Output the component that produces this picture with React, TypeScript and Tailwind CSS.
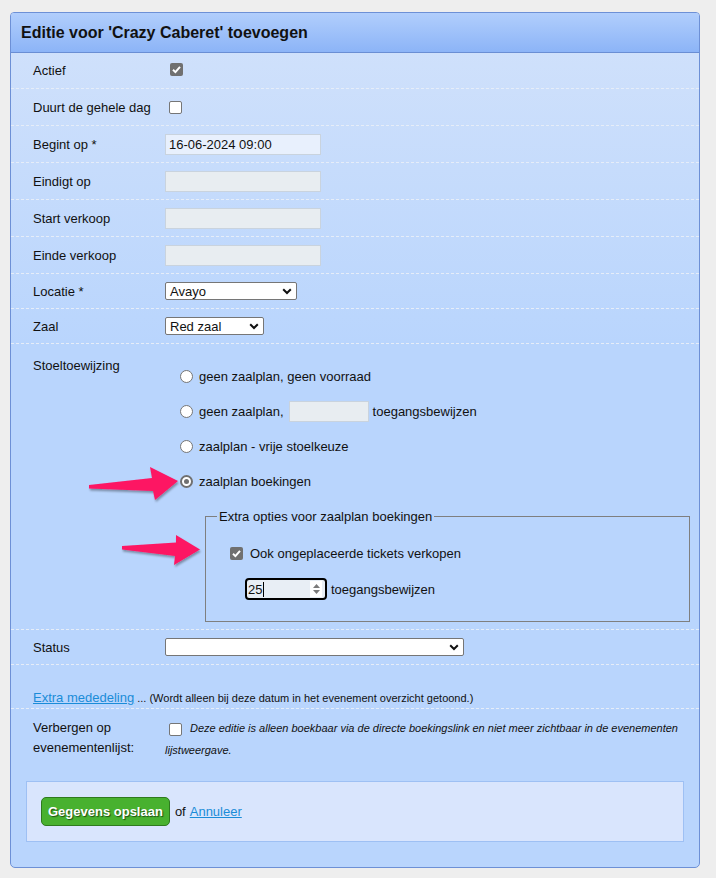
import React from "react";

const CheckBox = ({ checked }: { checked?: boolean }) =>
  checked ? (
    <span className="inline-flex h-[13px] w-[13px] shrink-0 items-center justify-center rounded-[2px] bg-[#707070]">
      <svg width="13" height="13" viewBox="0 0 13 13">
        <path d="M3 6.8 L5.4 9.1 L10 3.8" fill="none" stroke="white" strokeWidth="2" />
      </svg>
    </span>
  ) : (
    <span className="inline-block h-[13px] w-[13px] shrink-0 rounded-[2px] border border-[#767676] bg-white align-[-2px]" />
  );

const Radio = ({ checked }: { checked?: boolean }) => (
  <span
    className={
      checked
        ? "inline-flex h-[13px] w-[13px] shrink-0 items-center justify-center rounded-full border-2 border-[#707070] bg-white"
        : "inline-flex h-[13px] w-[13px] shrink-0 items-center justify-center rounded-full border border-[#767676] bg-white"
    }
  >
    {checked && <span className="h-[5px] w-[5px] rounded-full bg-[#707070]" />}
  </span>
);

const Select = ({ value, width }: { value: string; width: string }) => (
  <div
    className={`flex h-[18px] items-center justify-between rounded-[2px] border border-[#767676] bg-white pl-[4px] pr-[4px] text-[13px] ${width}`}
  >
    <span>{value}</span>
    <svg width="10" height="7" viewBox="0 0 10 7">
      <path d="M1.2 1.2 L5 5 L8.8 1.2" fill="none" stroke="#111" strokeWidth="2" />
    </svg>
  </div>
);

const TextBox = ({ value, width = "w-[156px]" }: { value?: string; width?: string }) => (
  <div
    className={`flex h-[21px] items-center border border-[#c9d3de] pl-[3px] text-[13px] ${width} ${
      value ? "bg-[#e8f0fd]" : "bg-[#e8edf1]"
    }`}
  >
    {value}
  </div>
);

const Row = ({
  label,
  height,
  children,
}: {
  label: string;
  height: string;
  children?: React.ReactNode;
}) => (
  <div className={`flex items-center border-b border-dashed border-[#e6edf8] pl-[22px] ${height}`}>
    <div className="w-[132px] shrink-0">{label}</div>
    <div className="flex items-center">{children}</div>
  </div>
);

export default function App() {
  return (
    <div className="relative min-h-[878px] bg-[#eeeeee] pt-[12px] font-['Liberation_Sans',Arial,sans-serif] text-[13px] leading-[15px] text-[#111]">
      <div className="ml-[10px] w-[690px] overflow-hidden rounded-t-[4px] rounded-b-[5px] border border-[#6d90d6] bg-[linear-gradient(to_bottom,#d2e2fb_0px,#b9d5fd_330px)]">
        <div className="flex h-[40px] items-center border-b border-[#6a8ed4] bg-[linear-gradient(to_bottom,#b1cefc,#8cb4f7)] pl-[10px] text-[16px] font-bold">
          Editie voor 'Crazy Caberet' toevoegen
        </div>

        <Row label="Actief" height="h-[36px]">
          <span className="ml-[5px]">
            <CheckBox checked />
          </span>
        </Row>
        <Row label="Duurt de gehele dag" height="h-[37px]">
          <span className="ml-[4px] flex">
            <CheckBox />
          </span>
        </Row>
        <Row label="Begint op *" height="h-[37px]">
          <TextBox value="16-06-2024 09:00" />
        </Row>
        <Row label="Eindigt op" height="h-[37px]">
          <TextBox />
        </Row>
        <Row label="Start verkoop" height="h-[37px]">
          <TextBox />
        </Row>
        <Row label="Einde verkoop" height="h-[37px]">
          <TextBox />
        </Row>
        <Row label="Locatie *" height="h-[35px]">
          <Select value="Avayo" width="w-[132px]" />
        </Row>
        <Row label="Zaal" height="h-[35px]">
          <Select value="Red zaal" width="w-[99px]" />
        </Row>

        <div className="flex border-b border-dashed border-[#e6edf8] pb-[7px] pl-[22px]">
          <div className="w-[132px] shrink-0 pt-[14px]">Stoeltoewijzing</div>
          <div className="pt-[15px]">
            <div className="flex h-[35px] items-center pl-[15px]">
              <Radio />
              <span className="ml-[6px]">geen zaalplan, geen voorraad</span>
            </div>
            <div className="flex h-[35px] items-center pl-[15px]">
              <Radio />
              <span className="ml-[6px]">geen zaalplan,</span>
              <span className="ml-[5px] mr-[4px]">
                <TextBox width="w-[80px]" />
              </span>
              <span>toegangsbewijzen</span>
            </div>
            <div className="flex h-[35px] items-center pl-[15px]">
              <Radio />
              <span className="ml-[6px]">zaalplan - vrije stoelkeuze</span>
            </div>
            <div className="flex h-[35px] items-center pl-[15px]">
              <Radio checked />
              <span className="ml-[6px]">zaalplan boekingen</span>
            </div>
            <fieldset className="ml-[40px] mt-[10px] w-[485px] border border-[#7f7f7f] px-[11px] pb-[21px]">
              <legend className="px-[2px]">Extra opties voor zaalplan boekingen</legend>
              <div className="ml-[13px] mt-[19px] flex h-[20px] items-center">
                <CheckBox checked />
                <span className="ml-[7px]">Ook ongeplaceerde tickets verkopen</span>
              </div>
              <div className="ml-[28px] mt-[15px] flex items-center">
                <div className="flex h-[22px] w-[82px] items-center rounded-[4px] border-2 border-black bg-[#e8eef5] pl-[1px]">
                  <span>25</span>
                  <span className="ml-[1px] h-[15px] w-[1px] bg-black" />
                  <span className="ml-auto mr-[3px] flex h-[16px] w-[12px] flex-col items-center justify-center gap-[2px] bg-white">
                    <svg width="7" height="4" viewBox="0 0 7 4">
                      <path d="M0 4 L3.5 0 L7 4 Z" fill="#7a7a7a" />
                    </svg>
                    <svg width="7" height="4" viewBox="0 0 7 4">
                      <path d="M0 0 L3.5 4 L7 0 Z" fill="#7a7a7a" />
                    </svg>
                  </span>
                </div>
                <span className="ml-[4px]">toegangsbewijzen</span>
              </div>
            </fieldset>
          </div>
        </div>

        <Row label="Status" height="h-[35px]">
          <Select value="" width="w-[299px]" />
        </Row>

        <div className="h-[44px] border-b border-dashed border-[#e6edf8] pl-[22px] pt-[25px]">
          <a className="text-[#1a8cd8] underline">Extra mededeling</a>
          <span className="text-[11px]"> ... (Wordt alleen bij deze datum in het evenement overzicht getoond.)</span>
        </div>

        <div className="flex pl-[22px] pt-[9px] leading-[20px]">
          <div className="w-[132px] shrink-0">
            Verbergen op
            <br />
            evenementenlijst:
          </div>
          <div className="w-[525px] text-[11px] italic">
            <span className="ml-[4px] mr-[8px] inline-block align-[-2px]">
              <CheckBox />
            </span>
            Deze editie is alleen boekbaar via de directe boekingslink en niet meer zichtbaar in de evenementen lijstweergave.
          </div>
        </div>

        <div className="mx-[15px] mb-[25px] ml-[15px] mt-[21px] border border-[#9ec0f4] bg-[#d9e5fd] pb-[15px] pl-[14px] pt-[15px]">
          <div className="flex items-center">
            <button className="h-[29px] rounded-[5px] border border-[#2e7a1e] bg-[#48b12f] px-[6px] text-[13px] font-bold text-white [text-shadow:1px_1px_1px_#1f4f12]">
              Gegevens opslaan
            </button>
            <span className="ml-[5px]">of</span>
            <a className="ml-[4px] text-[#1a8cd8] underline">Annuleer</a>
          </div>
        </div>
      </div>

      <svg className="pointer-events-none absolute left-0 top-0" width="716" height="878" viewBox="0 0 716 878">
        <defs>
          <filter id="sh" x="-20%" y="-40%" width="140%" height="180%">
            <feDropShadow dx="1" dy="2" stdDeviation="1.3" floodColor="#000" floodOpacity="0.35" />
          </filter>
        </defs>
        <polygon
          points="89,485 152,478 150,467 178,481 155,500 153,491 89,488.5"
          fill="#fd1563"
          filter="url(#sh)"
        />
        <polygon
          points="122,546 176,542.5 176,535 200,549.5 174,565 175,556 122,549.5"
          fill="#fd1563"
          filter="url(#sh)"
        />
      </svg>
    </div>
  );
}
